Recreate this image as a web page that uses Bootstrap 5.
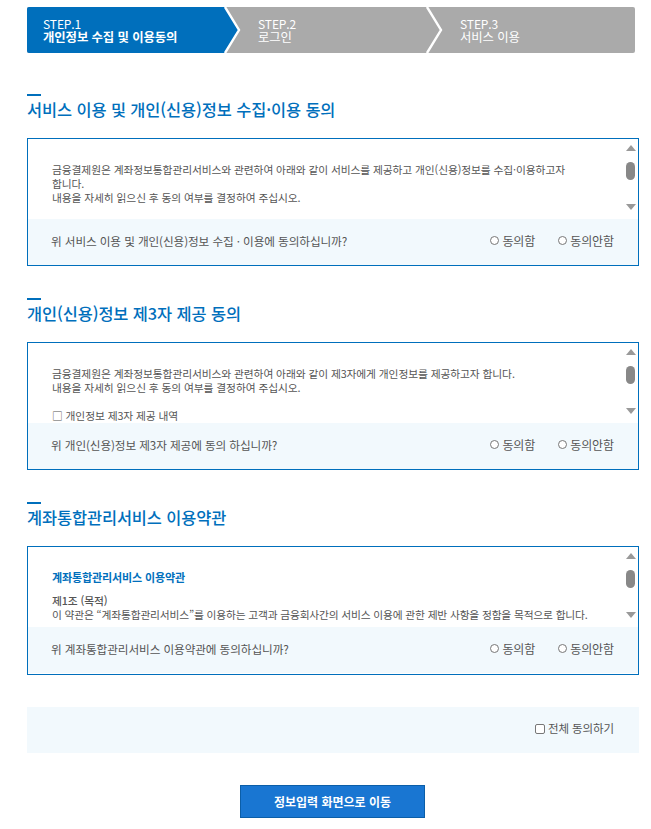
<!DOCTYPE html>
<html lang="ko"><head><meta charset="utf-8">
<link rel="stylesheet" href="https://cdn.jsdelivr.net/npm/bootstrap@5.3.0/dist/css/bootstrap.min.css">
<style>
html,body{background:#fff}
body{font-family:"Noto Sans CJK KR","Noto Sans",sans-serif;color:#555;padding:7px 12px 11px 27px;letter-spacing:-.1px}
.stepbar{height:46px;margin:0 4px 39px 0;background:#aaa;border-radius:2px;overflow:hidden;color:#fff;font-size:12.4px;line-height:13.5px}
.stepitem{position:relative;padding:10px 0 0 16px;height:46px}
.stepa{width:198px;background:#006fbc;font-weight:700}
.stepa small{display:block;font-size:12px;font-weight:400}
.stepb{width:202px;padding-left:33px}
.stepc{flex:1;padding-left:33px}
.stepline{display:block;font-size:12px}
.chev{position:absolute;top:0;height:46px;width:18px;z-index:1}
.grouptitle{margin:30px 0 18px;font-size:16.4px;line-height:22px;font-weight:500;color:#006fbc;padding-top:2px;letter-spacing:-.1px}
.grouptitle::before{content:"";display:block;width:14px;height:2px;background:#006fbc;margin-bottom:2px}
.agreebox{height:128px;border:1px solid #006fbc;background:#fff}
.agreebox.tallbox{height:129px}
.agreescroll{height:80px;overflow:hidden;padding:24px 43px 0 24px;font-size:10.75px;line-height:14px;color:#555;word-break:keep-all}
.agreescroll p{margin:0}
.agreescroll .termhead{color:#006fbc;font-weight:700;margin-bottom:10px;font-size:11px;line-height:13px;letter-spacing:-.12px}
.agreescroll .termsub{font-weight:500}
.agreescroll .termbody{letter-spacing:-.17px}
.scrolltrack{position:absolute;right:0;top:0;width:18px;height:80px}
.arrowup,.arrowdown{position:absolute;left:6px;width:0;height:0;border-left:5px solid transparent;border-right:5px solid transparent}
.arrowup{top:6px;border-bottom:6px solid #999}
.arrowdown{bottom:9px;border-top:6px solid #999}
.thumbbar{position:absolute;left:6px;top:23px;width:9px;height:18px;border-radius:5px;background:#888}
.answerrow{height:46px;background:#f2f9fd;padding:0 24px 3px 23px;font-size:11.65px;color:#555}
.radiogroup{gap:23px}
.radioitem{display:flex;align-items:center;gap:3px;font-size:12px}
.radioitem input{appearance:none;width:9px;height:9px;border:1px solid #777;border-radius:50%;background:#fff;margin:0}
.allrow{height:46px;margin-top:32px;background:#f2f9fd;padding:0 25px 2px;font-size:11.5px}
.allrow input{appearance:none;width:10px;height:10px;border:1px solid #777;border-radius:2px;background:#fff;margin:0}
.allrow label{gap:3px}
.gowrap{padding-right:1px}
.gobtn{width:185px;height:33px;margin-top:32px;background:#1976d2;border:1px solid #0b5ea8;border-radius:0;color:#fff;font-size:12px;font-weight:700;padding:0}
.gobtn:hover{background:#1976d2;color:#fff}
</style></head><body>
<div class="stepbar d-flex position-relative">
<div class="stepitem stepa"><small>STEP.1</small>개인정보 수집 및 이용동의</div>
<svg class="chev" style="left:197px" viewBox="0 0 18 46"><polygon points="0,0 0,46 1,46 15,23 1,0" fill="#006fbc"/><polyline points="1,0 15,23 1,46" fill="none" stroke="#fff" stroke-width="2.4"/></svg>
<div class="stepitem stepb"><span class="stepline">STEP.2</span>로그인</div>
<svg class="chev" style="left:399px" viewBox="0 0 18 46"><polyline points="1,0 15,23 1,46" fill="none" stroke="#fff" stroke-width="2.4"/></svg>
<div class="stepitem stepc"><span class="stepline">STEP.3</span>서비스 이용</div>
</div>

<h2 class="grouptitle">서비스 이용 및 개인(신용)정보 수집·이용 동의</h2>
<section class="agreebox">
<div class="position-relative">
<div class="agreescroll"><p>금융결제원은 계좌정보통합관리서비스와 관련하여 아래와 같이 서비스를 제공하고 개인(신용)정보를 수집·이용하고자 합니다.</p><p>내용을 자세히 읽으신 후 동의 여부를 결정하여 주십시오.</p></div>
<div class="scrolltrack"><i class="arrowup"></i><i class="thumbbar"></i><i class="arrowdown"></i></div>
</div>
<div class="answerrow d-flex align-items-center justify-content-between"><span>위 서비스 이용 및 개인(신용)정보 수집 · 이용에 동의하십니까?</span><div class="d-flex radiogroup"><label class="radioitem"><input type="radio" name="a1">동의함</label><label class="radioitem"><input type="radio" name="a1">동의안함</label></div></div>
</section>

<h2 class="grouptitle">개인(신용)정보 제3자 제공 동의</h2>
<section class="agreebox">
<div class="position-relative">
<div class="agreescroll"><p>금융결제원은 계좌정보통합관리서비스와 관련하여 아래와 같이 제3자에게 개인정보를 제공하고자 합니다.</p><p>내용을 자세히 읽으신 후 동의 여부를 결정하여 주십시오.</p><p>&nbsp;</p><p>□ 개인정보 제3자 제공 내역</p></div>
<div class="scrolltrack"><i class="arrowup"></i><i class="thumbbar"></i><i class="arrowdown"></i></div>
</div>
<div class="answerrow d-flex align-items-center justify-content-between"><span>위 개인(신용)정보 제3자 제공에 동의 하십니까?</span><div class="d-flex radiogroup"><label class="radioitem"><input type="radio" name="a2">동의함</label><label class="radioitem"><input type="radio" name="a2">동의안함</label></div></div>
</section>

<h2 class="grouptitle">계좌통합관리서비스 이용약관</h2>
<section class="agreebox tallbox">
<div class="position-relative">
<div class="agreescroll"><p class="termhead">계좌통합관리서비스 이용약관</p><p class="termsub">제1조 (목적)</p><p class="termbody">이 약관은 “계좌통합관리서비스”를 이용하는 고객과 금융회사간의 서비스 이용에 관한 제반 사항을 정함을 목적으로 합니다.</p></div>
<div class="scrolltrack"><i class="arrowup"></i><i class="thumbbar"></i><i class="arrowdown"></i></div>
</div>
<div class="answerrow d-flex align-items-center justify-content-between"><span>위 계좌통합관리서비스 이용약관에 동의하십니까?</span><div class="d-flex radiogroup"><label class="radioitem"><input type="radio" name="a3">동의함</label><label class="radioitem"><input type="radio" name="a3">동의안함</label></div></div>
</section>

<div class="allrow d-flex align-items-center justify-content-end"><label class="d-flex align-items-center"><input type="checkbox">전체 동의하기</label></div>
<div class="d-flex justify-content-center gowrap"><button type="button" class="btn gobtn">정보입력 화면으로 이동</button></div>
<script src="https://cdn.jsdelivr.net/npm/bootstrap@5.3.0/dist/js/bootstrap.bundle.min.js"></script>
</body></html>
